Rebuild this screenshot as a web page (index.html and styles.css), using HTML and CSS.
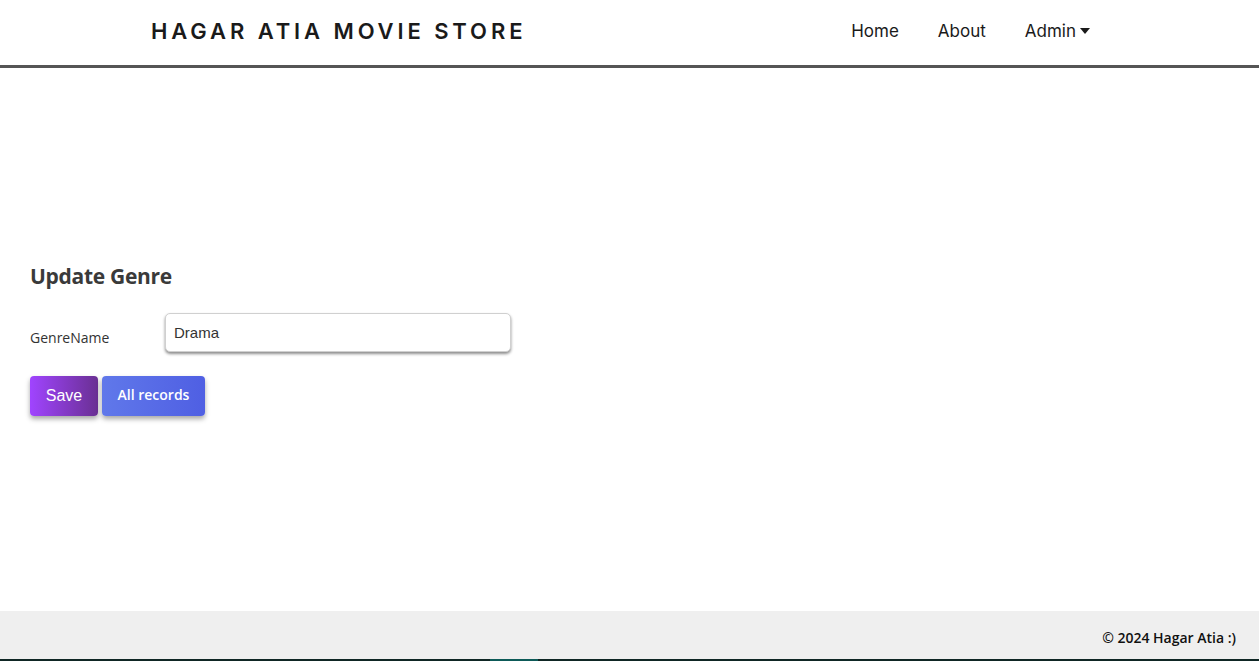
FILE: index.html
```html
<!DOCTYPE html>
<html lang="en">
<head>
<meta charset="utf-8">
<title>Update Genre</title>
<link rel="stylesheet" href="styles.css">
</head>
<body>
<div class="page">
  <header class="topbar">
    <div class="brand">HAGAR ATIA MOVIE STORE</div>
    <nav class="nav">
      <a class="nav-link" href="#">Home</a>
      <a class="nav-link" href="#">About</a>
      <a class="nav-link" href="#">Admin<svg class="caret" width="10" height="6" viewBox="0 0 10 6"><path d="M0 0H10L5 6Z" fill="#1a1a1a"/></svg></a>
    </nav>
  </header>
  <main class="main">
    <section class="form-card">
      <h2 class="title">Update Genre</h2>
      <div class="field">
        <label class="label">GenreName</label>
        <input class="input" type="text" value="Drama">
      </div>
      <div class="actions">
        <button class="btn btn-save">Save</button>
        <button class="btn btn-all">All records</button>
      </div>
    </section>
  </main>
  <footer class="footer">
    <span class="copy">© 2024 Hagar Atia :)</span>
  </footer>
  <div class="bottom-strip"><span class="strip-accent"></span></div>
</div>
</body>
</html>
```

FILE: styles.css
```css
* { box-sizing: border-box; }
html, body { margin: 0; padding: 0; background: #fff; }
body { font-family: "Open Sans", "Liberation Sans", sans-serif; }
.page { display: flex; flex-direction: column; height: 661px; }

.topbar {
  height: 68px;
  flex: 0 0 68px;
  border-bottom: 3px solid #555;
  display: flex;
  align-items: center;
  justify-content: space-between;
  padding: 0 169px 4px 151px;
}
.brand {
  font-family: "Inter", "Liberation Sans", sans-serif;
  font-weight: 600;
  font-size: 22px;
  letter-spacing: 3.9px;
  color: #1a1a1a;
}
.nav { display: flex; gap: 39px; }
.nav-link {
  font-family: "Inter", "Liberation Sans", sans-serif;
  font-size: 17px;
  color: #1a1a1a;
  text-decoration: none;
  display: flex;
  align-items: center;
  gap: 4px;
}
.caret { margin-top: 1px; }

.main {
  flex: 1;
  display: flex;
  align-items: center;
  padding: 0 30px;
}
.form-card { margin-top: -1px; }
.title {
  margin: 0 0 23px;
  font-family: "Open Sans", sans-serif;
  font-weight: 700;
  font-size: 21px;
  color: #3a3a3a;
  letter-spacing: -0.3px;
}
.field { display: flex; align-items: center; }
.label {
  width: 135px;
  font-size: 14px;
  color: #333;
  padding-top: 10px;
}
.input {
  width: 346px;
  height: 39px;
  border: 1px solid #d0d0d0;
  border-radius: 5px;
  box-shadow: 0 2px 3px rgba(0,0,0,0.45);
  font-family: "Liberation Sans", Arial, sans-serif;
  font-size: 15px;
  color: #333;
  padding: 0 8px 1px;
  outline: none;
}
.actions { display: flex; gap: 4px; margin-top: 24px; }
.btn {
  height: 40px;
  border: none;
  border-radius: 4px;
  color: #fff;
  cursor: pointer;
  box-shadow: 0 3px 5px rgba(0,0,0,0.35);
}
.btn-save {
  width: 68px;
  background: linear-gradient(to right, #a044ff, #6a3093);
  font-family: "Liberation Sans", Arial, sans-serif;
  font-size: 16px;
  padding-bottom: 1px;
}
.btn-all {
  width: 103px;
  background: linear-gradient(to right, #6078ea, #4f5fe3);
  font-family: "Open Sans", sans-serif;
  font-weight: 600;
  font-size: 14px;
  padding-bottom: 5px;
}

.footer {
  flex: 0 0 48px;
  background: #efefef;
  display: flex;
  align-items: center;
  justify-content: flex-end;
  padding: 4px 23px 0;
}
.copy { font-family: "Open Sans", sans-serif; font-weight: 600; font-size: 14px; color: #111; }
.bottom-strip { flex: 0 0 2px; background: #0f2624; }
.strip-accent { display: block; width: 48px; height: 2px; margin-left: 490px; background: #0d5a58; }
```
